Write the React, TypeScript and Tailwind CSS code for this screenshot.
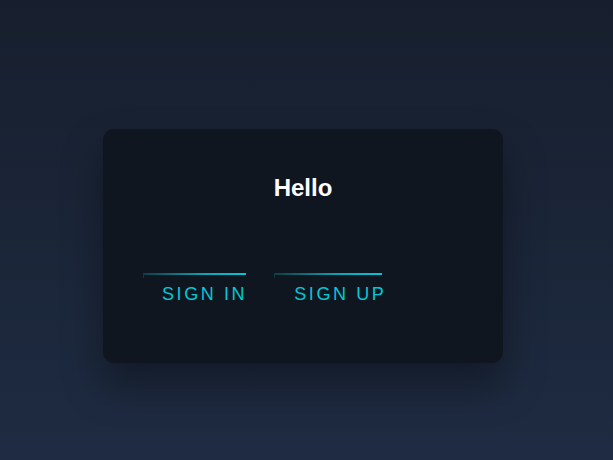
export default function App() {
  return (
    <div className="min-h-[460px] w-full bg-gradient-to-b from-[#171f2e] to-[#1e2b42] pt-[129px] flex justify-center pr-[7px]" style={{ fontFamily: '"Liberation Sans", Arial, sans-serif' }}>
      <div className="w-[400px] h-[234px] rounded-[11px] bg-[#10161f] shadow-[0_22px_40px_rgba(0,0,0,0.35)] flex flex-col pt-[47px]">
        <h1 className="text-center text-[24px] leading-none font-bold text-white">Hello</h1>
        <div className="flex gap-[27px] pl-[40px] mt-[73px]">
          <button className="flex flex-col items-start">
            <div className="relative w-[103px] h-[2px] bg-gradient-to-r from-[#0e3d47] via-[#06a8b8] via-60% to-[#00c8d8]">
              <div className="absolute left-0 top-0 w-px h-[5px] bg-[#0e3a44]" />
            </div>
            <span className="mt-[10px] pl-[19px] text-[18px] leading-none tracking-[2.6px] text-[#00c8d8]">SIGN IN</span>
          </button>
          <button className="flex flex-col items-start">
            <div className="relative w-[108px] h-[2px] bg-gradient-to-r from-[#0e3d47] via-[#06a8b8] via-60% to-[#00c8d8]">
              <div className="absolute left-0 top-0 w-px h-[5px] bg-[#0e3a44]" />
            </div>
            <span className="mt-[10px] pl-[20px] text-[18px] leading-none tracking-[2.6px] text-[#00c8d8]">SIGN UP</span>
          </button>
        </div>
      </div>
    </div>
  );
}
